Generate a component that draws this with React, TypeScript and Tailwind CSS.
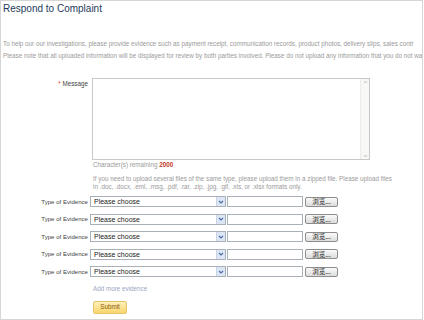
import React from "react";

const rows = [0, 1, 2, 3, 4];

function EvidenceRow() {
    return (
        <div className="flex items-center h-[11px]">
            <div className="w-[89px] pr-[2px] text-right text-[6.1px] text-[#444] whitespace-nowrap">Type of Evidence</div>
            <div className="flex items-center w-[136px] h-[11px] border border-[#a9b0b8] bg-white">
                <span className="flex-1 pl-[3px] text-[7px] text-[#222] leading-none">Please choose</span>
                <div className="flex items-center justify-center w-[9px] h-[9px] bg-[#dde6f4] border-l border-[#c9d4e6]">
                    <svg width="6" height="4" viewBox="0 0 6 4">
                        <path d="M1 1 L3 3 L5 1" stroke="#4a6aa8" strokeWidth="1.1" fill="none" />
                    </svg>
                </div>
            </div>
            <div className="ml-[1px] w-[76px] h-[11px] border border-[#a9b0b8] bg-white" />
            <div className="ml-[2px] flex items-center justify-center w-[33px] h-[10px] border border-[#8d8d8d] rounded-[2px] bg-gradient-to-b from-[#fafafa] to-[#dcdcdc] text-[6.5px] text-[#222] leading-none font-['Noto_Sans_CJK_SC',sans-serif]">
                浏览...
            </div>
        </div>
    );
}

export default function App() {
    return (
        <div className="w-[424px] h-[320px] bg-white overflow-hidden font-['Liberation_Sans',Arial,sans-serif]">
            <div className="w-[423px] h-[320px] border border-[#d6d6d6] overflow-hidden">
                <h1 className="mt-[2px] ml-[2px] text-[10px] leading-[12px] text-[#1e3a5a]">Respond to Complaint</h1>

                <p className="mt-[23px] ml-[2px] whitespace-nowrap text-[6.3px] leading-[12px] text-[#9a9a9a]">
                    To help our our investigations, please provide evidence such as payment receipt, communication records, product photos, delivery slips, sales contr
                </p>
                <p className="ml-[2px] whitespace-nowrap text-[6.3px] leading-[12px] text-[#9a9a9a]">
                    Please note that all uploaded information will be displayed for review by both parties involved. Please do not upload any information that you do not wa
                </p>

                <div className="mt-[16px] flex">
                    <div className="w-[91px] pr-[4px] pt-[2px] text-right text-[6.3px] leading-[8px] text-[#444]">
                        <span className="text-[#d33]">*</span> Message
                    </div>
                    <div className="flex w-[278px] h-[82px] border border-[#c8c8c8] bg-white">
                        <div className="flex-1" />
                        <div className="flex flex-col justify-between w-[9px] bg-[#f7f7f5] border-l border-[#ececec] py-[1px] items-center">
                            <svg width="5" height="4" viewBox="0 0 5 4">
                                <path d="M1 3 L2.5 1 L4 3" stroke="#bbb" strokeWidth="0.8" fill="none" />
                            </svg>
                            <svg width="5" height="4" viewBox="0 0 5 4">
                                <path d="M1 1 L2.5 3 L4 1" stroke="#bbb" strokeWidth="0.8" fill="none" />
                            </svg>
                        </div>
                    </div>
                </div>

                <div className="ml-[92px] text-[6.3px] leading-[10px] text-[#9a9a9a]">
                    Character(s) remaining <span className="font-bold text-[#c0392b]">2000</span>
                </div>

                <div className="mt-[5px] ml-[92px] whitespace-nowrap text-[6.3px] leading-[7.5px] text-[#9a9a9a]">
                    If you need to upload several files of the same type, please upload them in a zipped file. Please upload files
                    <br />
                    in .doc, .docx, .eml, .msg, .pdf, .rar, .zip, .jpg, .gif, .xls, or .xlsx formats only.
                </div>

                <div className="mt-[6px] flex flex-col gap-[6.5px]">
                    {rows.map((r) => (
                        <EvidenceRow key={r} />
                    ))}
                </div>

                <div className="mt-[6.5px] ml-[92px] text-[6.3px] leading-[10px] text-[#9aa6c4]">Add more evidence</div>

                <button className="mt-[7px] ml-[92px] flex items-center justify-center w-[34px] h-[13px] border border-[#e6c46a] rounded-[2px] bg-gradient-to-b from-[#fff0b8] to-[#f8d46a] text-[6.3px] text-[#8a5a10]">
                    Submit
                </button>
            </div>
        </div>
    );
}
